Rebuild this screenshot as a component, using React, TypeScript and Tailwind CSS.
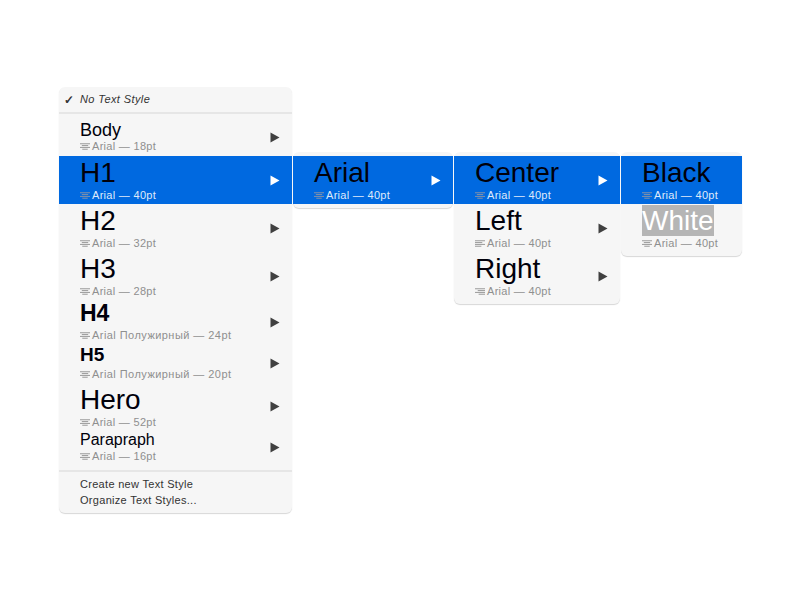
const FONT = "font-['Liberation_Sans',Arial,sans-serif]"

function AlignIcon({ align = 'center' }: { align?: 'center' | 'left' | 'right' }) {
  const short = align === 'center' ? 'M2 3.5h7' : align === 'left' ? 'M0 3.5h8' : 'M3 3.5h8'
  const short2 = align === 'center' ? 'M2.5 7.5h6' : align === 'left' ? 'M0 7.5h7' : 'M4 7.5h7'
  return (
    <svg width="10" height="9" viewBox="0 0 11 9" className="shrink-0" stroke="currentColor" strokeWidth="0.9" fill="none">
      <path d="M0 1.5h11" />
      <path d={short} />
      <path d="M0 5.5h11" />
      <path d={short2} />
    </svg>
  )
}

function Arrow({ active }: { active?: boolean }) {
  return (
    <svg width="10" height="11" viewBox="0 0 10 11" className="shrink-0">
      <path d="M0.5 0.5L9.5 5.5L0.5 10.5Z" fill={active ? '#ffffff' : '#404040'} />
    </svg>
  )
}

type RowProps = {
  title: string
  sub: string
  titleClass?: string
  rowClass?: string
  subClass?: string
  active?: boolean
  selected?: boolean
  arrow?: boolean
  align?: 'center' | 'left' | 'right'
}

function Row({ title, sub, titleClass = 'text-[28px] leading-[32px] pt-[1px]', rowClass = 'h-[48px]', subClass = 'tracking-[0.3px]', active, selected, arrow = true, align }: RowProps) {
  return (
    <div className={`flex items-center justify-between pl-[21px] pr-[12px] ${rowClass} ${active ? 'bg-[#0069e0]' : ''}`}>
      <div className="flex flex-col pb-[2px]">
        <div className={`${titleClass} text-[#00000a]`}>
          {selected ? <span className="bg-[#b5b5b5] text-white">{title}</span> : title}
        </div>
        <div className={`flex items-center gap-[2px] text-[11px] leading-[13px] ${subClass} ${active ? 'text-[#dfe9fa]' : 'text-[#8f8f8f]'}`}>
          <span className={active ? 'text-[#a09a9a]' : 'text-[#858585]'}><AlignIcon align={align} /></span>
          <span>{sub}</span>
        </div>
      </div>
      {arrow && <Arrow active={active} />}
    </div>
  )
}

const panel = 'bg-[#f6f6f6] rounded-[6px] shadow-[0_1px_1px_rgba(0,0,0,0.16)]'

export default function App() {
  return (
    <div className={`${FONT} w-[800px] h-[600px] bg-white flex items-start gap-px pl-[59px] pt-[87px] overflow-hidden`}>
      {/* Main menu */}
      <div className={`${panel} w-[233px]`}>
        <div className="h-[25px] flex items-center pl-[5px] text-[11px] tracking-[0.4px] text-[#333333]">
          <span className="w-[16px] text-[12px] font-bold">✓</span>
          <span className="italic">No Text Style</span>
        </div>
        <div className="h-[2px] bg-[#e6e6e6]" />
        <div className="pt-[4px]">
          <Row title="Body" sub="Arial — 18pt" titleClass="text-[18px] leading-[20px] pt-[1px]" rowClass="h-[38px]" />
          <Row title="H1" sub="Arial — 40pt" active />
          <Row title="H2" sub="Arial — 32pt" />
          <Row title="H3" sub="Arial — 28pt" />
          <Row title="H4" sub="Arial Полужирный — 24pt" subClass="tracking-[0.45px]" titleClass="text-[23px] leading-[26px] font-bold mb-[3px]" rowClass="h-[44px]" />
          <Row title="H5" sub="Arial Полужирный — 20pt" subClass="tracking-[0.45px]" titleClass="text-[19px] leading-[21px] font-bold mb-[3px]" rowClass="h-[38px]" />
          <Row title="Hero" sub="Arial — 52pt" titleClass="text-[28px] leading-[32px] pt-[1px]" rowClass="h-[49px]" />
          <Row title="Parapraph" sub="Arial — 16pt" titleClass="text-[16px] leading-[18px] mb-[1px]" rowClass="h-[33px]" />
        </div>
        <div className="h-[2px] bg-[#e6e6e6] mt-[6px]" />
        <div className="pt-[4px] pb-[5px] pl-[21px] text-[11px] leading-[16px] tracking-[0.3px] text-[#333333]">
          <div>Create new Text Style</div>
          <div>Organize Text Styles...</div>
        </div>
      </div>

      {/* Font family */}
      <div className={`${panel} w-[160px] mt-[65px] py-[4px]`}>
        <Row title="Arial" sub="Arial — 40pt" active />
      </div>

      {/* Alignment */}
      <div className={`${panel} w-[166px] mt-[65px] py-[4px]`}>
        <Row title="Center" sub="Arial — 40pt" active />
        <Row title="Left" sub="Arial — 40pt" align="left" />
        <Row title="Right" sub="Arial — 40pt" align="right" />
      </div>

      {/* Colour */}
      <div className={`${panel} w-[121px] mt-[65px] py-[4px]`}>
        <Row title="Black" sub="Arial — 40pt" active arrow={false} />
        <Row title="White" sub="Arial — 40pt" selected arrow={false} />
      </div>
    </div>
  )
}
